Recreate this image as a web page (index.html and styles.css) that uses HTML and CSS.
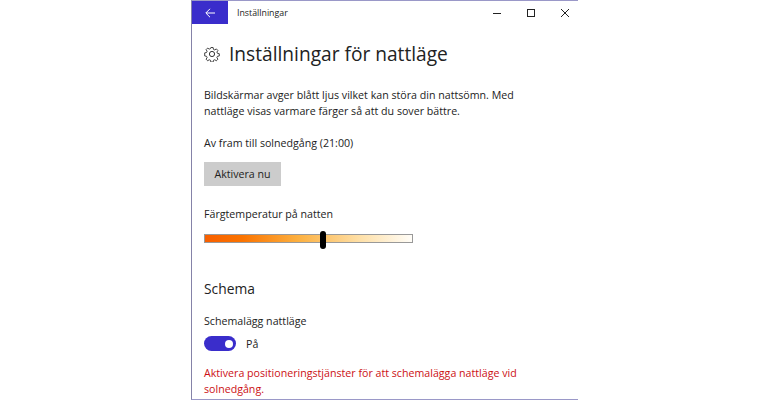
FILE: index.html
```html
<!DOCTYPE html>
<html lang="sv">
<head>
<meta charset="utf-8">
<title>Inställningar</title>
<link rel="stylesheet" href="styles.css">
</head>
<body>
<div class="window">
  <header class="titlebar">
    <div class="back">
      <svg width="10" height="10" viewBox="0 0 10 10"><path d="M10 5H1M5 .8L.8 5 5 9.2" fill="none" stroke="#fff" stroke-width="1"/></svg>
    </div>
    <div class="apptitle">Inställningar</div>
    <div class="controls">
      <div class="ctl"><svg width="10" height="10" viewBox="0 0 10 10"><path d="M1 5.5h8" stroke="#222" fill="none"/></svg></div>
      <div class="ctl"><svg width="10" height="10" viewBox="0 0 10 10"><rect x="1.5" y="1.5" width="7" height="7" stroke="#222" fill="none"/></svg></div>
      <div class="ctl"><svg width="10" height="10" viewBox="0 0 10 10"><path d="M1 1l8 8M9 1l-8 8" stroke="#222" fill="none"/></svg></div>
    </div>
  </header>
  <main class="content">
    <div class="heading">
      <svg class="gear" width="16" height="16" viewBox="0 0 16 16"><path d="M6.8 1h2.4l.4 2 1.4.6 1.7-1.1 1.7 1.7-1.1 1.7.6 1.4 2 .4v2.4l-2 .4-.6 1.4 1.1 1.7-1.7 1.7-1.7-1.1-1.4.6-.4 2H6.8l-.4-2-1.4-.6-1.7 1.1-1.7-1.7 1.1-1.7-.6-1.4-2-.4V6.8l2-.4.6-1.4-1.1-1.7 1.7-1.7 1.7 1.1 1.4-.6z" transform="translate(.6 .6) scale(.925)" fill="none" stroke="#333" stroke-width="1"/><circle cx="8" cy="8" r="2.6" fill="none" stroke="#333" stroke-width="1"/></svg>
      <h1>Inställningar för nattläge</h1>
    </div>
    <p class="intro">Bildskärmar avger blått ljus vilket kan störa din nattsömn. Med nattläge visas varmare färger så att du sover bättre.</p>
    <p class="status">Av fram till solnedgång (21:00)</p>
    <button class="btn">Aktivera nu</button>
    <div class="label temp">Färgtemperatur på natten</div>
    <div class="slider"><span class="thumb"></span></div>
    <h2>Schema</h2>
    <div class="label">Schemalägg nattläge</div>
    <div class="toggle-row"><span class="toggle"><span class="knob"></span></span><span class="on">På</span></div>
    <p class="warn">Aktivera positioneringstjänster för att schemalägga nattläge vid solnedgång.</p>
  </main>
</div>
</body>
</html>
```
FILE: styles.css
```css
* { box-sizing: border-box; }
html, body { margin: 0; height: 100%; background: #fff; overflow: hidden; }
body { padding-left: 191px; font-family: "Open Sans", "Noto Sans", sans-serif; color: #222; }
.window { width: 387px; height: 400px; border-top: 1px solid #9a98c8; border-bottom: 1px solid #9a98c8; border-left: 1px solid #8583a8; overflow: hidden; display: flex; flex-direction: column; background: #fff; }
.titlebar { height: 23px; display: flex; align-items: center; flex: none; }
.back { width: 36px; height: 23px; background: #3a2dcb; display: flex; align-items: center; justify-content: center; }
.apptitle { margin-left: 9px; font-size: 8.8px; flex: 1; color: #222; }
.controls { display: flex; gap: 10px; margin-right: 1px; }
.ctl { width: 24px; height: 22px; display: flex; align-items: center; justify-content: center; }
.content { padding: 0 12px; flex: 1; }
.heading { display: flex; align-items: center; gap: 9px; margin-top: 16px; height: 28px; }
.gear { flex: none; }
h1 { margin: 0; font-size: 19.15px; font-weight: 400; color: #222; white-space: nowrap; }
.intro { margin: 19px 0 0; font-size: 10.65px; line-height: 16px; width: 340px; }
.status { margin: 16px 0 0; font-size: 10.65px; line-height: 17px; }
.btn { display: block; margin-top: 10px; width: 77px; height: 24px; border: 0; padding: 0; background: #ccc; font: inherit; font-size: 10.65px; color: #222; }
.label { font-size: 10.65px; line-height: 17px; }
.temp { margin-top: 20px; }
.slider { position: relative; margin-top: 11px; width: 209px; height: 9px; border: 1px solid #999; background: linear-gradient(90deg, #f85f00 0%, #fa7300 18%, #fcb040 45%, #fee0a8 75%, #fffdf8 100%); }
.thumb { position: absolute; left: 115px; top: -4px; width: 6px; height: 18px; background: #000; border-radius: 3px; }
h2 { margin: 36px 0 0; font-size: 13.8px; font-weight: 400; line-height: 20px; }
h2 + .label { margin-top: 14px; }
.toggle-row { display: flex; align-items: center; margin-top: 6px; gap: 10px; }
.toggle { width: 32px; height: 15px; border-radius: 8px; background: #3a2dcb; display: flex; align-items: center; justify-content: flex-end; padding-right: 3px; }
.knob { width: 8px; height: 8px; border-radius: 50%; background: #fff; }
.on { font-size: 10.65px; }
.warn { margin: 14px 0 0; font-size: 10.65px; line-height: 16px; color: #cc0f14; width: 340px; }
```
